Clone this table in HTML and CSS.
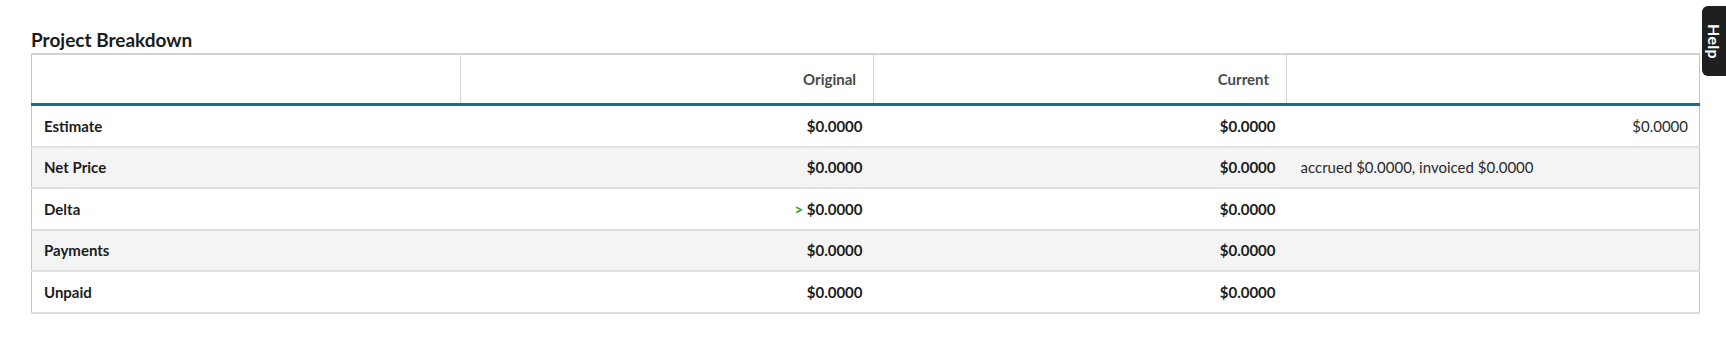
FILE: index.html
```html
<!DOCTYPE html>
<html>
<head>
<meta charset="utf-8">
<link rel="stylesheet" href="styles.css">
</head>
<body>
<div class="page">
  <h2 class="title">Project Breakdown</h2>
  <table class="breakdown">
    <colgroup>
      <col class="c-label">
      <col class="c-num">
      <col class="c-num">
      <col class="c-num">
    </colgroup>
    <thead>
      <tr>
        <th></th>
        <th class="num">Original</th>
        <th class="num">Current</th>
        <th></th>
      </tr>
    </thead>
    <tbody>
      <tr>
        <td class="label">Estimate</td>
        <td class="num">$0.0000</td>
        <td class="num">$0.0000</td>
        <td class="note right">$0.0000</td>
      </tr>
      <tr class="alt">
        <td class="label">Net Price</td>
        <td class="num">$0.0000</td>
        <td class="num">$0.0000</td>
        <td class="note">accrued $0.0000, invoiced $0.0000</td>
      </tr>
      <tr>
        <td class="label">Delta</td>
        <td class="num"><span class="gt">&gt;</span> $0.0000</td>
        <td class="num">$0.0000</td>
        <td class="note"></td>
      </tr>
      <tr class="alt">
        <td class="label">Payments</td>
        <td class="num">$0.0000</td>
        <td class="num">$0.0000</td>
        <td class="note"></td>
      </tr>
      <tr>
        <td class="label">Unpaid</td>
        <td class="num">$0.0000</td>
        <td class="num">$0.0000</td>
        <td class="note"></td>
      </tr>
    </tbody>
  </table>
</div>
<div class="help-tab"><span>Help</span></div>
</body>
</html>
```

FILE: styles.css
```css
html, body {
  margin: 0;
  padding: 0;
  background: #ffffff;
}

body {
  font-family: Lato, "Open Sans", sans-serif;
  color: #1f1f1f;
  width: 1726px;
  height: 358px;
  overflow: hidden;
}

.page {
  padding: 28px 27px 0 31px;
}

.title {
  margin: 0 0 2px 0;
  font-size: 19px;
  line-height: 23px;
  font-weight: 700;
  color: #1b1b1b;
}

.breakdown {
  width: 1668px;
  border-collapse: collapse;
  table-layout: fixed;
  border-top: 2px solid #d2d2d2;
  border-left: 1px solid #c4c4c4;
  border-right: 1px solid #c4c4c4;
  border-bottom: 2px solid #dedede;
  font-size: 15px;
}

.c-label { width: 429px; }
.c-num { width: 413px; }

.breakdown th {
  height: 48px;
  padding: 0 17px 0 12px;
  font-weight: 700;
  color: #4a4a4a;
  border-left: 1px solid #d6d6d6;
  border-bottom: 3px solid #1e6b8c;
  vertical-align: middle;
  text-align: left;
}

.breakdown th:first-child {
  border-left: none;
}

.breakdown th.num {
  text-align: right;
}

.breakdown td {
  height: 39.5px;
  padding: 0 11px 0 12px;
  border-bottom: 2px solid #e0e0e0;
  vertical-align: middle;
}

.breakdown tbody tr:last-child td {
  border-bottom: none;
}

.breakdown tr.alt td {
  background: #f4f4f4;
}

.label {
  font-weight: 700;
  color: #1c1c1c;
}

.num {
  text-align: right;
  font-weight: 700;
  color: #1c1c1c;
}

.note {
  font-weight: 400;
  color: #2a2a2a;
  padding-left: 14px !important;
}

.note.right {
  text-align: right;
}

.gt {
  color: #3b9a3b;
  font-weight: 700;
  font-size: 15px;
}

.help-tab {
  position: absolute;
  top: 6px;
  right: 0;
  width: 24px;
  height: 70px;
  background: #1f1f1f;
  border-radius: 6px 0 0 6px;
  display: flex;
  align-items: center;
  justify-content: center;
}

.help-tab span {
  writing-mode: vertical-rl;
  color: #ffffff;
  font-weight: 700;
  font-size: 16px;
  font-family: Lato, "Open Sans", sans-serif;
  letter-spacing: 0.3px;
}
```
